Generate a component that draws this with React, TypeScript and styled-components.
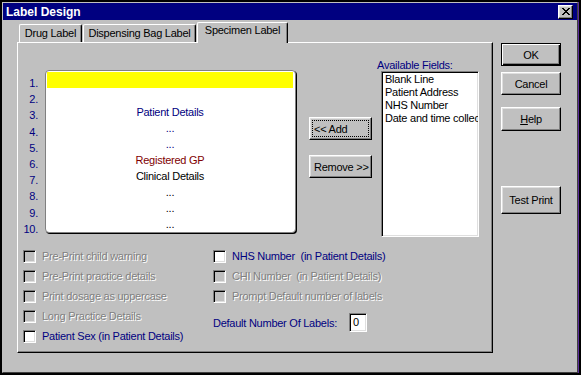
import React from "react";
import styled, { createGlobalStyle, css } from "styled-components";

const GlobalStyle = createGlobalStyle`
  html, body {
    margin: 0;
    padding: 0;
    background: #000;
  }
  body {
    font-family: "Liberation Sans", Arial, sans-serif;
    font-size: 11px;
    letter-spacing: -0.25px;
    color: #000;
  }
`;

const NAVY = "#000080";
const MAROON = "#800000";

const raised = css`
  border-top: 1px solid #fff;
  border-left: 1px solid #fff;
  border-right: 1px solid #000;
  border-bottom: 1px solid #000;
  box-shadow: inset -1px -1px 0 #808080, inset 1px 1px 0 #dfdfdf;
`;

const sunken = css`
  border-top: 1px solid #808080;
  border-left: 1px solid #808080;
  border-right: 1px solid #fff;
  border-bottom: 1px solid #fff;
  box-shadow: inset 1px 1px 0 #000, inset -1px -1px 0 #dfdfdf;
`;

const Win = styled.div`
  box-sizing: border-box;
  margin: 2px 0 0 2px;
  width: 576px;
  height: 371px;
  background: #c0c0c0;
  border-top: 1px solid #c0c0c0;
  border-left: 1px solid #c0c0c0;
  border-right: 1px solid #404040;
  border-bottom: 1px solid #404040;
  box-shadow: 1px 0 0 #5b2d9c;
  display: flex;
  flex-direction: column;
`;

const TitleBar = styled.div`
  height: 17px;
  background: ${NAVY};
  display: flex;
  align-items: center;
  justify-content: space-between;
  padding: 0 4px 0 3px;
`;

const TitleText = styled.span`
  color: #fff;
  font-weight: bold;
  font-size: 12px;
  letter-spacing: 0;
`;

const CloseBtn = styled.div`
  box-sizing: border-box;
  width: 15px;
  height: 14px;
  background: #c0c0c0;
  ${raised};
  display: flex;
  align-items: center;
  justify-content: center;
`;

const Body = styled.div`
  display: flex;
  padding: 2px 0 0 14px;
`;

const LeftPart = styled.div`
  display: flex;
  flex-direction: column;
  width: 476px;
`;

const TabsRow = styled.div`
  display: flex;
  align-items: flex-end;
  height: 20px;
  padding-left: 2px;
  gap: 1px;
`;

const Tab = styled.div<{ $w: number; $active?: boolean }>`
  box-sizing: border-box;
  width: ${(p) => p.$w}px;
  height: ${(p) => (p.$active ? 21 : 18)}px;
  margin-bottom: ${(p) => (p.$active ? -1 : 0)}px;
  position: relative;
  z-index: ${(p) => (p.$active ? 2 : 0)};
  background: #c0c0c0;
  border-top: 1px solid #fff;
  border-left: 1px solid #fff;
  border-right: 1px solid #000;
  border-radius: 2px 2px 0 0;
  box-shadow: inset -1px 0 0 #808080;
  text-align: center;
  line-height: 13px;
  padding-top: ${(p) => (p.$active ? 1 : 2)}px;
  white-space: nowrap;
`;

const Panel = styled.div`
  box-sizing: border-box;
  width: 476px;
  height: 311px;
  border-top: 1px solid #fff;
  border-left: 1px solid #fff;
  border-right: 1px solid #000;
  border-bottom: 1px solid #000;
  box-shadow: inset -1px -1px 0 #808080;
  display: flex;
  flex-direction: column;
`;

const TopRow = styled.div`
  display: flex;
  align-items: flex-start;
  height: 207px;
`;

const NumCol = styled.div`
  width: 20px;
  margin-top: 32px;
  text-align: right;
  color: ${NAVY};
  line-height: 16.2px;
`;

const LabelBox = styled.div`
  box-sizing: border-box;
  margin: 27px 0 0 7px;
  width: 251px;
  height: 163px;
  background: #fff;
  border: 1px solid #808080;
  border-radius: 4px;
  box-shadow: 1px 1px 0 #000;
  padding: 1px 2px 0 1px;
`;

const LabelLine = styled.div<{ $color?: string; $highlight?: boolean }>`
  height: 16px;
  line-height: 16px;
  text-align: center;
  color: ${(p) => p.$color || "#000"};
  background: ${(p) => (p.$highlight ? "#ffff00" : "transparent")};
`;

const MidCol = styled.div`
  display: flex;
  flex-direction: column;
  gap: 15px;
  margin: 74px 0 0 13px;
`;

const Button = styled.div<{ $w: number; $h: number; $default?: boolean; $focus?: boolean; $left?: boolean }>`
  box-sizing: border-box;
  position: relative;
  width: ${(p) => p.$w}px;
  height: ${(p) => p.$h}px;
  background: #c0c0c0;
  display: flex;
  align-items: center;
  justify-content: ${(p) => (p.$left ? "flex-start" : "center")};
  padding-left: ${(p) => (p.$left ? 4 : 0)}px;
  white-space: nowrap;
  ${(p) =>
    p.$default
      ? css`
          border: 1px solid #000;
          box-shadow: inset 1px 1px 0 #fff, inset -1px -1px 0 #000, inset -2px -2px 0 #808080;
        `
      : raised}
  ${(p) =>
    p.$focus &&
    css`
      &::after {
        content: "";
        position: absolute;
        left: 2px;
        top: 2px;
        right: 2px;
        bottom: 2px;
        border: 1px dotted #000;
      }
    `}
`;

const FieldsCol = styled.div`
  display: flex;
  flex-direction: column;
  margin: 16px 0 0 9px;
`;

const FieldsLabel = styled.div`
  line-height: 12px;
  margin-left: -4px;
  color: ${NAVY};
  white-space: nowrap;
`;

const ListBox = styled.div`
  box-sizing: border-box;
  width: 98px;
  height: 166px;
  background: #fff;
  ${sunken};
  padding: 1px 0 0 3px;
  overflow: hidden;
`;

const ListItem = styled.div`
  line-height: 13px;
  white-space: nowrap;
`;

const CheckSection = styled.div`
  display: flex;
  padding-left: 5px;
`;

const CheckColumn = styled.div<{ $w?: number }>`
  display: flex;
  flex-direction: column;
  width: ${(p) => (p.$w ? `${p.$w}px` : "auto")};
`;

const CheckRow = styled.div`
  display: flex;
  align-items: flex-start;
  height: 20px;
`;

const Box = styled.div<{ $disabled?: boolean }>`
  box-sizing: border-box;
  width: 13px;
  height: 13px;
  flex-shrink: 0;
  background: ${(p) => (p.$disabled ? "#c0c0c0" : "#fff")};
  ${sunken};
`;

const CheckLabel = styled.span<{ $disabled?: boolean }>`
  margin-left: 6px;
  line-height: 13px;
  white-space: pre;
  color: ${(p) => (p.$disabled ? "#808080" : NAVY)};
  text-shadow: ${(p) => (p.$disabled ? "1px 1px 0 #fff" : "none")};
`;

const NumRow = styled.div`
  display: flex;
  align-items: center;
  height: 19px;
  margin-top: 3px;
`;

const NumLabel = styled.span`
  width: 136px;
  color: ${NAVY};
  white-space: nowrap;
`;

const NumInput = styled.div`
  box-sizing: border-box;
  width: 18px;
  height: 19px;
  background: #fff;
  ${sunken};
  padding: 1px 0 0 3px;
  line-height: 15px;
`;

const ButtonCol = styled.div`
  display: flex;
  flex-direction: column;
  margin: 21px 0 0 8px;
`;

const Spaced = styled.div<{ $top: number }>`
  margin-top: ${(p) => p.$top}px;
`;

const CloseGlyph = () => (
  <svg width="8" height="7" viewBox="0 0 8 7" shapeRendering="crispEdges">
    <path
      d="M0 0h2v1H0zM6 0h2v1H6zM1 1h2v1H1zM5 1h2v1H5zM2 2h4v1H2zM3 3h2v1H3zM2 4h4v1H2zM1 5h2v1H1zM5 5h2v1H5zM0 6h2v1H0zM6 6h2v1H6z"
      fill="#000"
    />
  </svg>
);

const lines: { text: string; color?: string; highlight?: boolean }[] = [
  { text: "", highlight: true },
  { text: "" },
  { text: "Patient Details", color: NAVY },
  { text: "...", color: NAVY },
  { text: "...", color: NAVY },
  { text: "Registered GP", color: MAROON },
  { text: "Clinical Details" },
  { text: "..." },
  { text: "..." },
  { text: "..." },
];

const fields = ["Blank Line", "Patient Address", "NHS Number", "Date and time collected"];

const leftChecks = [
  { text: "Pre-Print child warning", disabled: true },
  { text: "Pre-Print practice details", disabled: true },
  { text: "Print dosage as uppercase", disabled: true },
  { text: "Long Practice Details", disabled: true },
  { text: "Patient Sex (in Patient Details)", disabled: false },
];

const rightChecks = [
  { text: "NHS Number  (in Patient Details)", disabled: false },
  { text: "CHI Number  (in Patient Details)", disabled: true },
  { text: "Prompt Default number of labels", disabled: true },
];

export default function App() {
  return (
    <>
      <GlobalStyle />
      <Win>
        <TitleBar>
          <TitleText>Label Design</TitleText>
          <CloseBtn>
            <CloseGlyph />
          </CloseBtn>
        </TitleBar>
        <Body>
          <LeftPart>
            <TabsRow>
              <Tab $w={63}>Drug Label</Tab>
              <Tab $w={113}>Dispensing Bag Label</Tab>
              <Tab $w={91} $active>
                Specimen Label
              </Tab>
            </TabsRow>
            <Panel>
              <TopRow>
                <NumCol>
                  {lines.map((_, i) => (
                    <div key={i}>{i + 1}.</div>
                  ))}
                </NumCol>
                <LabelBox>
                  {lines.map((l, i) => (
                    <LabelLine key={i} $color={l.color} $highlight={l.highlight}>
                      {l.text}
                    </LabelLine>
                  ))}
                </LabelBox>
                <MidCol>
                  <Button $w={63} $h={23} $focus $left>
                    &lt;&lt; Add
                  </Button>
                  <Button $w={63} $h={23} $left>
                    Remove &gt;&gt;
                  </Button>
                </MidCol>
                <FieldsCol>
                  <FieldsLabel>Available Fields:</FieldsLabel>
                  <ListBox>
                    {fields.map((f) => (
                      <ListItem key={f}>{f}</ListItem>
                    ))}
                  </ListBox>
                </FieldsCol>
              </TopRow>
              <CheckSection>
                <CheckColumn $w={190}>
                  {leftChecks.map((c) => (
                    <CheckRow key={c.text}>
                      <Box $disabled={c.disabled} />
                      <CheckLabel $disabled={c.disabled}>{c.text}</CheckLabel>
                    </CheckRow>
                  ))}
                </CheckColumn>
                <CheckColumn>
                  {rightChecks.map((c) => (
                    <CheckRow key={c.text}>
                      <Box $disabled={c.disabled} />
                      <CheckLabel $disabled={c.disabled}>{c.text}</CheckLabel>
                    </CheckRow>
                  ))}
                  <NumRow>
                    <NumLabel>Default Number Of Labels:</NumLabel>
                    <NumInput>0</NumInput>
                  </NumRow>
                </CheckColumn>
              </CheckSection>
            </Panel>
          </LeftPart>
          <ButtonCol>
            <Button $w={60} $h={23} $default>
              OK
            </Button>
            <Spaced $top={6}>
              <Button $w={60} $h={23}>
                Cancel
              </Button>
            </Spaced>
            <Spaced $top={12}>
              <Button $w={60} $h={24}>
                <span>
                  <u>H</u>elp
                </span>
              </Button>
            </Spaced>
            <Spaced $top={55}>
              <Button $w={60} $h={28}>
                Test Print
              </Button>
            </Spaced>
          </ButtonCol>
        </Body>
      </Win>
    </>
  );
}
